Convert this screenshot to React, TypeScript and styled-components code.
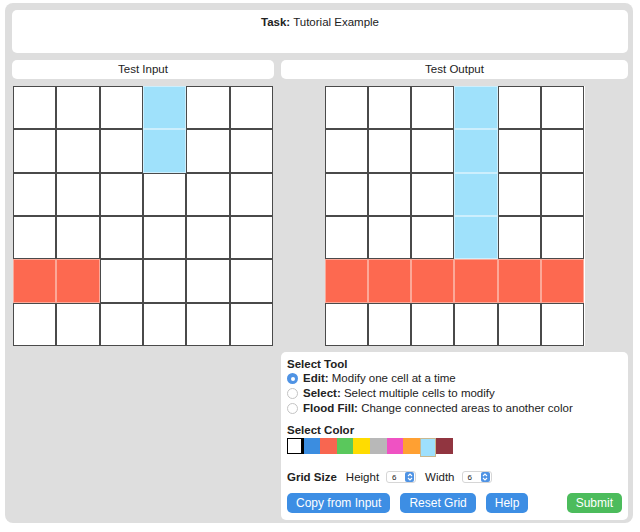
import React from "react";
import styled, { createGlobalStyle } from "styled-components";

const Global = createGlobalStyle`
  html, body { margin: 0; padding: 0; background: #fff; }
  body { font-family: "Liberation Sans", Arial, Helvetica, sans-serif; color: #222; }
`;

const Page = styled.div`
  margin: 3px 0 0 5px;
  width: 628px;
  height: 520px;
  box-sizing: border-box;
  background: #dedede;
  border-radius: 8px;
  padding: 7px 5px 0 7px;
  display: flex;
  flex-direction: column;
  gap: 7px;
`;

const TaskBox = styled.div`
  height: 43px;
  background: #fff;
  border-radius: 5px;
  text-align: center;
  font-size: 11.5px;
  padding-top: 6px;
  box-sizing: border-box;
`;

const Columns = styled.div`
  display: flex;
  gap: 7px;
`;

const Column = styled.div<{ $w: number }>`
  width: ${(p) => p.$w}px;
  display: flex;
  flex-direction: column;
  align-items: center;
  gap: 7px;
`;

const Header = styled.div`
  align-self: stretch;
  height: 19px;
  line-height: 19px;
  background: #fff;
  border-radius: 5px;
  text-align: center;
  font-size: 11.5px;
`;

const Grid = styled.div`
  width: 260px;
  height: 260px;
  display: grid;
  grid-template-columns: repeat(6, 1fr);
  grid-template-rows: repeat(6, 1fr);
  background: #fff;
`;

const Cell = styled.div<{ $c: string; $b: string }>`
  background: ${(p) => p.$c};
  border: 1px solid ${(p) => p.$b};
  box-sizing: border-box;
`;

const Panel = styled.div`
  align-self: stretch;
  margin-top: -1px;
  height: 168px;
  background: #fff;
  border-radius: 5px;
  padding: 5px 6px 0 6px;
  box-sizing: border-box;
  font-size: 11.5px;
  display: flex;
  flex-direction: column;
`;

const Title = styled.div<{ $gap?: number }>`
  font-weight: bold;
  line-height: 14px;
  margin-top: ${(p) => p.$gap ?? 0}px;
`;

const RadioRow = styled.label`
  display: flex;
  align-items: center;
  gap: 5px;
  height: 15px;
  line-height: 15px;
`;

const Radio = styled.span<{ $on?: boolean }>`
  width: 11px;
  height: 11px;
  border-radius: 50%;
  box-sizing: border-box;
  border: ${(p) => (p.$on ? "none" : "1px solid #c4c4c4")};
  background: ${(p) => (p.$on ? "#4f93e4" : "#fff")};
  display: flex;
  align-items: center;
  justify-content: center;
  &::after {
    content: "";
    width: 4px;
    height: 4px;
    border-radius: 50%;
    background: ${(p) => (p.$on ? "#fff" : "transparent")};
  }
`;

const Swatches = styled.div`
  display: flex;
  margin-top: 1px;
  height: 16px;
`;

const Swatch = styled.div<{ $c: string; $sel?: boolean; $first?: boolean }>`
  width: 16.6px;
  height: ${(p) => (p.$sel ? 19 : 16)}px;
  background: ${(p) => p.$c};
  box-sizing: border-box;
  border: ${(p) =>
    p.$first ? "1px solid #000" : p.$sel ? "1px solid #c9b88f" : "none"};
  border-right-width: ${(p) => (p.$first ? 3 : p.$sel ? 1 : 0)}px;
`;

const SizeRow = styled.div`
  display: flex;
  align-items: center;
  margin-top: 16px;
  height: 14px;
  gap: 9px;
`;

const SelectBox = styled.span`
  display: inline-flex;
  align-items: center;
  justify-content: space-between;
  width: 30px;
  height: 12px;
  border: 1px solid #d6d6d6;
  border-radius: 3px;
  box-sizing: border-box;
  font-size: 8px;
  padding-left: 5px;
  padding-right: 1px;
  margin-left: -2px;
  background: #fff;
`;

const SelectArrow = styled.span`
  width: 9px;
  height: 10px;
  background: #4f93e4;
  border-radius: 2px;
  display: flex;
  align-items: center;
  justify-content: center;
`;

const Buttons = styled.div`
  display: flex;
  gap: 10px;
  margin-top: 9px;
`;

const Button = styled.button<{ $green?: boolean }>`
  font-family: inherit;
  font-size: 12px;
  color: #fff;
  background: ${(p) => (p.$green ? "#4cbc5c" : "#3d8ee4")};
  border: none;
  border-radius: 5px;
  height: 20px;
  padding: 0 9px;
  ${(p) => (p.$green ? "margin-left: auto;" : "")}
`;

const W = "#ffffff";
const B = "#9fe1fb";
const R = "#fd6950";

const input = [
  [W, W, W, B, W, W],
  [W, W, W, B, W, W],
  [W, W, W, W, W, W],
  [W, W, W, W, W, W],
  [R, R, W, W, W, W],
  [W, W, W, W, W, W],
];
const output = [
  [W, W, W, B, W, W],
  [W, W, W, B, W, W],
  [W, W, W, B, W, W],
  [W, W, W, B, W, W],
  [R, R, R, R, R, R],
  [W, W, W, W, W, W],
];

const borderFor = (c: string) =>
  c === W ? "#4a4a4a" : c === B ? "#cdeffd" : "#fca898";

const GridView = ({ data }: { data: string[][] }) => (
  <Grid>
    {data.flat().map((c, i) => (
      <Cell key={i} $c={c} $b={borderFor(c)} />
    ))}
  </Grid>
);

const colors = [
  "#ffffff",
  "#3b8de0",
  "#f86650",
  "#5ac85c",
  "#ffdc00",
  "#b8b8b8",
  "#ef52c3",
  "#ffa032",
  "#9ee0fd",
  "#913540",
];

const Arrows = () => (
  <svg width="6" height="8" viewBox="0 0 6 8">
    <path d="M1 3 L3 1 L5 3 M1 5 L3 7 L5 5" stroke="#fff" strokeWidth="1.1" fill="none" />
  </svg>
);

const SizeSelect = () => (
  <SelectBox>
    6
    <SelectArrow>
      <Arrows />
    </SelectArrow>
  </SelectBox>
);

export default function App() {
  return (
    <>
      <Global />
      <Page>
        <TaskBox>
          <b>Task:</b> Tutorial Example
        </TaskBox>
        <Columns>
          <Column $w={262}>
            <Header>Test Input</Header>
            <GridView data={input} />
          </Column>
          <Column $w={347}>
            <Header>Test Output</Header>
            <GridView data={output} />
            <Panel>
              <Title>Select Tool</Title>
              <RadioRow>
                <Radio $on />
                <span>
                  <b>Edit:</b> Modify one cell at a time
                </span>
              </RadioRow>
              <RadioRow>
                <Radio />
                <span>
                  <b>Select:</b> Select multiple cells to modify
                </span>
              </RadioRow>
              <RadioRow>
                <Radio />
                <span>
                  <b>Flood Fill:</b> Change connected areas to another color
                </span>
              </RadioRow>
              <Title $gap={7}>Select Color</Title>
              <Swatches>
                {colors.map((c, i) => (
                  <Swatch key={c} $c={c} $first={i === 0} $sel={i === 8} />
                ))}
              </Swatches>
              <SizeRow>
                <Title>Grid Size</Title>
                <span>Height</span>
                <SizeSelect />
                <span>Width</span>
                <SizeSelect />
              </SizeRow>
              <Buttons>
                <Button>Copy from Input</Button>
                <Button>Reset Grid</Button>
                <Button>Help</Button>
                <Button $green>Submit</Button>
              </Buttons>
            </Panel>
          </Column>
        </Columns>
      </Page>
    </>
  );
}
